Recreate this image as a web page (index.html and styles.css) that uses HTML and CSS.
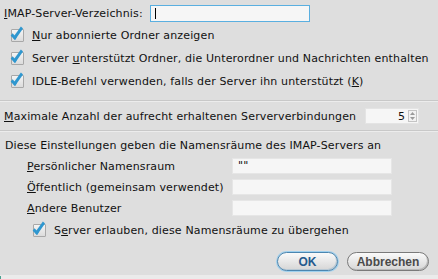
FILE: index.html
```html
<!DOCTYPE html>
<html lang="de">
<head>
    <meta charset="UTF-8">
    <title>IMAP-Einstellungen</title>
    <link rel="stylesheet" href="styles.css">
</head>
<body>
    <div class="dialog">
        <div class="row dir-row">
            <label class="dir-label"><u>I</u>MAP-Server-Verzeichnis:</label>
            <div class="text-input dir-input focused"><span class="caret"></span></div>
        </div>

        <div class="checks">
            <div class="check-row"><span class="check"></span><span><u>N</u>ur abonnierte Ordner anzeigen</span></div>
            <div class="check-row"><span class="check"></span><span>Server <u>u</u>nterstützt Ordner, die Unterordner und Nachrichten enthalten</span></div>
            <div class="check-row"><span class="check"></span><span>IDLE-Befehl verwenden, falls der Server ihn unterstützt (<u>K</u>)</span></div>
        </div>

        <div class="separator"></div>

        <div class="row max-row">
            <span><u>M</u>aximale Anzahl der aufrecht erhaltenen Serververbindungen</span>
            <div class="spinner">
                <span class="spin-value">5</span>
                <span class="spin-arrows">
                    <svg width="9" height="12" viewBox="0 0 9 12">
                        <rect x="0.5" y="0.5" width="8" height="11" fill="#f2f2f2" stroke="#c4c4c4"/>
                        <path d="M2 5 L4.5 2 L7 5 Z" fill="#9a9a9a"/>
                        <path d="M2 7 L4.5 10 L7 7 Z" fill="#9a9a9a"/>
                    </svg>
                </span>
            </div>
        </div>

        <div class="separator"></div>

        <p class="ns-title">Diese Einstellungen geben die Namensräume des IMAP-Servers an</p>

        <div class="ns-grid">
            <span class="ns-label"><u>P</u>ersönlicher Namensraum</span>
            <div class="text-input ns-input">""</div>
            <span class="ns-label"><u>Ö</u>ffentlich (gemeinsam verwendet)</span>
            <div class="text-input ns-input"></div>
            <span class="ns-label"><u>A</u>ndere Benutzer</span>
            <div class="text-input ns-input"></div>
        </div>

        <div class="check-row ns-check"><span class="check"></span><span>S<u>e</u>rver erlauben, diese Namensräume zu übergehen</span></div>

        <div class="buttons">
            <button class="btn btn-ok">OK</button>
            <button class="btn">Abbrechen</button>
        </div>
    </div>
    <div class="status-strip"><span class="status-mark"></span></div>
</body>
</html>
```

FILE: styles.css
```css
body {
    margin: 0;
    padding: 0;
    background-color: #dedede;
    font-family: "DejaVu Sans", sans-serif;
    font-size: 11px;
    letter-spacing: 0.14px;
    color: #111;
    width: 438px;
    height: 279px;
    overflow: hidden;
}

u {
    text-decoration: underline;
    text-underline-offset: 1px;
}

.dialog {
    height: 275px;
    display: flex;
    flex-direction: column;
}

.row {
    display: flex;
    align-items: center;
}

.dir-row {
    padding: 5px 0 0 4px;
    height: 17px;
}

.dir-label {
    width: 146px;
}

.text-input {
    box-sizing: border-box;
    background-color: #f6f6f6;
    border: 1px solid #e6e6e6;
    height: 16px;
    line-height: 14px;
    padding-left: 5px;
    font-size: 11px;
}

.dir-input {
    width: 160px;
    height: 17px;
    border-color: #5aafe0;
    display: flex;
    align-items: center;
}

.caret {
    width: 1px;
    height: 11px;
    background-color: #000;
    margin-left: -1px;
}

.checks {
    padding: 6px 0 0 11px;
    display: flex;
    flex-direction: column;
    gap: 9px;
}

.check-row {
    display: flex;
    align-items: center;
    height: 14px;
}

.check {
    position: relative;
    box-sizing: border-box;
    width: 13px;
    height: 13px;
    margin-right: 8px;
    background: linear-gradient(#f4f4f4, #dcdcdc);
    border: 1px solid #a8a8a8;
    border-radius: 1px;
}

.check::after {
    content: "";
    position: absolute;
    left: 3px;
    top: 4px;
    width: 11px;
    height: 3px;
    border-left: 3px solid #2f97cf;
    border-bottom: 3px solid #2f97cf;
    transform: rotate(-55deg) skewX(-10deg);
    transform-origin: left bottom;
}

.separator {
    height: 1px;
    background-color: #c8c8c8;
    border-bottom: 1px solid #ececec;
}

.checks + .separator {
    margin-top: 12px;
}

.max-row {
    height: 28px;
    padding-left: 4px;
}

.spinner {
    margin-left: 9px;
    width: 54px;
    height: 16px;
    box-sizing: border-box;
    background-color: #f6f6f6;
    border: 1px solid #e4e4e4;
    display: flex;
    align-items: center;
    justify-content: flex-end;
}

.spin-value {
    margin-right: 3px;
}

.spin-arrows {
    display: flex;
    margin-right: 1px;
}

.ns-title {
    margin: 7px 0 0 5px;
}

.ns-grid {
    display: grid;
    grid-template-columns: 205px 160px;
    row-gap: 5px;
    padding: 6px 0 0 27px;
    align-items: center;
}

.ns-input {
    height: 16px;
}

.ns-check {
    padding-left: 33px;
    margin-top: 7px;
}

.buttons {
    margin-top: auto;
    display: flex;
    justify-content: flex-end;
    gap: 9px;
    padding: 0 9px 4px 0;
}

.btn {
    height: 19px;
    border-radius: 10px;
    border: 1px solid #7a7a7a;
    background: linear-gradient(#fafafa, #e6e6e6 55%, #d6d6d6);
    box-shadow: inset -1px -1px 0 #b8b8b8;
    font-family: "Liberation Sans", sans-serif;
    font-weight: bold;
    font-size: 12px;
    letter-spacing: 0;
    color: #4a4a4a;
    padding: 0;
    width: 82px;
}

.btn-ok {
    width: 61px;
    color: #245a8e;
    border-color: #4b86b0;
    box-shadow: 0 0 0 1px #9fd0ee, inset -1px -1px 0 #b8c8d4;
}

.status-strip {
    height: 4px;
    background-color: #ebebeb;
    position: relative;
}

.status-mark {
    position: absolute;
    left: 0;
    top: 1px;
    width: 1px;
    height: 3px;
    background-color: #4aa090;
}
```
